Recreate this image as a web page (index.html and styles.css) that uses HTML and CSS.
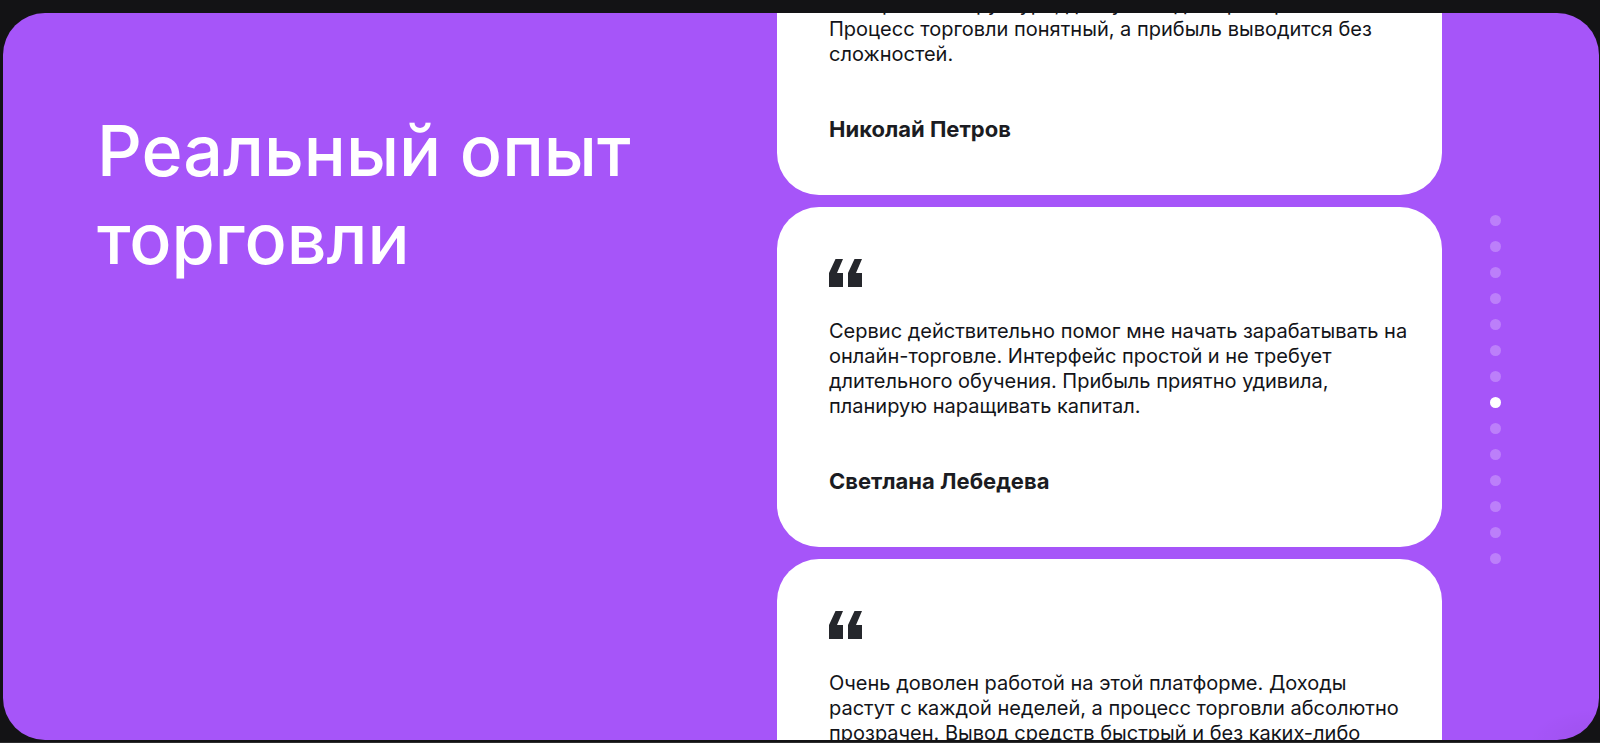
FILE: index.html
```html
<!DOCTYPE html>
<html lang="ru">
<head>
<meta charset="utf-8">
<title>Реальный опыт торговли</title>
<meta name="viewport" content="width=device-width, initial-scale=1">
<link rel="stylesheet" href="styles.css">
</head>
<body>
<svg class="sprite" aria-hidden="true">
  <symbol id="quote" viewBox="0 0 33 28">
    <path d="M0 28V14L6.5 0H14L8 14H14V28ZM19 28V14L25.5 0H33L27 14H33V28Z"/>
  </symbol>
</svg>
<main class="reviews">
  <h1 class="title">Реальный опыт торговли</h1>
  <div class="track">
    <article class="card">
      <svg class="quote" aria-hidden="true"><use href="#quote"/></svg>
      <p class="text">Отличный сервис для заработка.<br>Это простая структура, доступная для проверки.<br>Процесс торговли понятный, а прибыль выводится без<br>сложностей.</p>
      <h2 class="name">Николай Петров</h2>
    </article>
    <article class="card">
      <svg class="quote" aria-hidden="true"><use href="#quote"/></svg>
      <p class="text">Сервис действительно помог мне начать зарабатывать на<br>онлайн-торговле. Интерфейс простой и не требует<br>длительного обучения. Прибыль приятно удивила,<br>планирую наращивать капитал.</p>
      <h2 class="name">Светлана Лебедева</h2>
    </article>
    <article class="card">
      <svg class="quote" aria-hidden="true"><use href="#quote"/></svg>
      <p class="text">Очень доволен работой на этой платформе. Доходы<br>растут с каждой неделей, а процесс торговли абсолютно<br>прозрачен. Вывод средств быстрый и без каких-либо<br>задержек.</p>
      <h2 class="name">Андрей Смирнов</h2>
    </article>
  </div>
  <nav class="dots" aria-label="Отзывы">
    <button class="dot" aria-label="Отзыв 1"></button>
    <button class="dot" aria-label="Отзыв 2"></button>
    <button class="dot" aria-label="Отзыв 3"></button>
    <button class="dot" aria-label="Отзыв 4"></button>
    <button class="dot" aria-label="Отзыв 5"></button>
    <button class="dot" aria-label="Отзыв 6"></button>
    <button class="dot" aria-label="Отзыв 7"></button>
    <button class="dot active" aria-label="Отзыв 8" aria-current="true"></button>
    <button class="dot" aria-label="Отзыв 9"></button>
    <button class="dot" aria-label="Отзыв 10"></button>
    <button class="dot" aria-label="Отзыв 11"></button>
    <button class="dot" aria-label="Отзыв 12"></button>
    <button class="dot" aria-label="Отзыв 13"></button>
    <button class="dot" aria-label="Отзыв 14"></button>
  </nav>
</main>
</body>
</html>
```
FILE: styles.css
```css
* {
  box-sizing: border-box;
}

body {
  margin: 0;
  height: 100vh;
  padding: 13px 1px 2px 3px;
  background: #131315;
  border-bottom: 1px solid #2c2c2e;
  font-family: Inter, "Liberation Sans", sans-serif;
  color: #131419;
}

.sprite {
  display: none;
}

.reviews {
  display: grid;
  grid-template-columns: minmax(0, 1fr) minmax(0, 665px) 11px;
  column-gap: 48px;
  height: 100%;
  padding: 0 98px 0 94px;
  overflow: hidden;
  border-radius: 42px;
  background:
    radial-gradient(ellipse at 100% 100%, rgb(0 0 0 / 5%), transparent 70px),
    #a655f9;
}

.title {
  max-width: 600px;
  margin: 94px 0 0;
  font-size: 70px;
  font-weight: 500;
  line-height: 88px;
  color: #fff;
}

.track {
  display: flex;
  flex-direction: column;
  justify-content: center;
  gap: 12px;
  min-height: 0;
}

.card {
  flex: none;
  padding: 52px 32px 52px 52px;
  border-radius: 42px;
  background: #fff;
}

.quote {
  display: block;
  width: 33px;
  height: 28px;
  fill: #25272c;
}

.text {
  margin: 32px 0 48px;
  font-size: 20px;
  line-height: 25px;
  white-space: nowrap;
}

.name {
  margin: 0;
  font-size: 22px;
  font-weight: 700;
  line-height: 28px;
  color: #1b1c22;
}

.dots {
  display: flex;
  flex-direction: column;
  justify-content: center;
  gap: 15px;
  padding-top: 26px;
}

.dot {
  width: 11px;
  height: 11px;
  padding: 0;
  border: 0;
  border-radius: 50%;
  background: #bc7ffa;
  cursor: pointer;
}

.dot.active {
  background: #fff;
}
```
